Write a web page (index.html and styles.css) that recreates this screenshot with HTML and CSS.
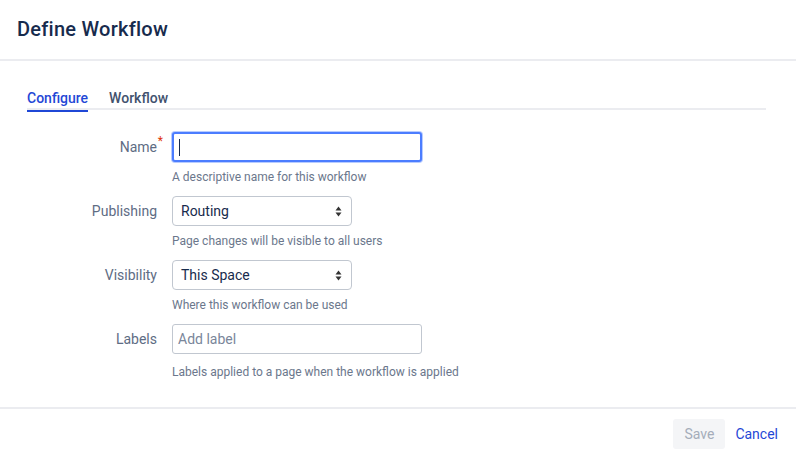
FILE: index.html
```html
<!DOCTYPE html>
<html>
<head>
<meta charset="utf-8">
<link rel="stylesheet" href="styles.css">
</head>
<body>
<div class="page">
  <header class="header"><h1 class="title">Define Workflow</h1></header>
  <main class="content">
    <nav class="tabs">
      <span class="tab active">Configure</span>
      <span class="tab">Workflow</span>
    </nav>
    <form class="form">
      <div class="row">
        <label class="label">Name<span class="req">*</span></label>
        <div class="field">
          <div class="text-input focused wide"><span class="caret"></span></div>
          <div class="help">A descriptive name for this workflow</div>
        </div>
      </div>
      <div class="row">
        <label class="label">Publishing</label>
        <div class="field">
          <div class="select">Routing<svg class="arrows" width="7" height="11" viewBox="0 0 7 11"><path d="M3.5 0.5 L6.5 4.5 H0.5 Z M3.5 10.5 L6.5 6.5 H0.5 Z" fill="#333"/></svg></div>
          <div class="help">Page changes will be visible to all users</div>
        </div>
      </div>
      <div class="row">
        <label class="label">Visibility</label>
        <div class="field">
          <div class="select">This Space<svg class="arrows" width="7" height="11" viewBox="0 0 7 11"><path d="M3.5 0.5 L6.5 4.5 H0.5 Z M3.5 10.5 L6.5 6.5 H0.5 Z" fill="#333"/></svg></div>
          <div class="help">Where this workflow can be used</div>
        </div>
      </div>
      <div class="row">
        <label class="label">Labels</label>
        <div class="field">
          <div class="text-input wide placeholder">Add label</div>
          <div class="help help-labels">Labels applied to a page when the workflow is applied</div>
        </div>
      </div>
    </form>
  </main>
  <footer class="footer">
    <button class="btn save" type="button">Save</button>
    <button class="btn cancel" type="button">Cancel</button>
  </footer>
</div>
</body>
</html>
```
FILE: styles.css
```css
* { box-sizing: border-box; }
html, body { margin: 0; padding: 0; background: #fff; }
body {
  font-family: Roboto, "Noto Sans", "Liberation Sans", sans-serif;
  color: #172b4d;
  width: 796px;
  height: 456px;
  overflow: hidden;
}
.page { display: flex; flex-direction: column; height: 456px; }
.header {
  height: 61px;
  border-bottom: 2px solid #ebecf0;
  padding: 0 17px;
  display: flex;
  align-items: center;
}
.title {
  margin: 0;
  font-size: 20px;
  font-weight: 500;
  letter-spacing: 0.25px;
  color: #172b4d;
  position: relative;
  top: -1px;
}
.content { flex: 1; padding: 0 30px 0 27px; }
.tabs {
  margin-top: 25px;
  display: flex;
  gap: 21px;
  border-bottom: 2px solid #ebecf0;
  height: 24px;
}
.tab {
  font-size: 14px;
  font-weight: 500;
  color: #42526e;
  line-height: 20px;
  height: 24px;
  padding-top: 2px;
}
.tab.active {
  color: #1f47d6;
  border-bottom: 2px solid #1f47d6;
  margin-bottom: -2px;
  height: 26px;
}
.form { margin-top: 22px; display: flex; flex-direction: column; }
.row {
  display: grid;
  grid-template-columns: 130px auto;
  column-gap: 15px;
  height: 64px;
}
.label {
  text-align: right;
  font-size: 14px;
  color: #5e6c84;
  line-height: 30px;
  position: relative;
}
.req {
  color: #de350b;
  position: absolute;
  right: -6px;
  top: -6px;
  font-size: 12px;
}
.field { display: flex; flex-direction: column; }
.text-input {
  height: 30px;
  border: 1px solid #c1c7d0;
  border-radius: 3px;
  font-size: 14px;
  line-height: 28px;
  padding: 0 6px;
  background: #fff;
}
.wide { width: 250px; }
.focused {
  border: 2px solid #4c7dff;
  box-shadow: 0 0 0 1px #b8ccff;
  display: flex;
  align-items: center;
  padding-left: 5px;
}
.caret {
  display: block;
  width: 1px;
  height: 17px;
  background: #172b4d;
}
.placeholder { color: #7a869a; padding-left: 5px; }
.select {
  width: 180px;
  height: 30px;
  border: 1px solid #c1c7d0;
  border-radius: 4px;
  font-size: 14px;
  line-height: 28px;
  padding: 0 8px;
  color: #172b4d;
  display: flex;
  justify-content: space-between;
  align-items: center;
}
.arrows { display: block; margin-right: 1px; }
.help {
  font-size: 12px;
  color: #6b778c;
  line-height: 16px;
  margin-top: 7px;
}
.help-labels { margin-top: 10px; }
.footer {
  height: 49px;
  border-top: 2px solid #ebecf0;
  display: flex;
  justify-content: flex-end;
  align-items: center;
  padding: 3px 18px 0 0;
  gap: 10px;
}
.btn {
  font-family: inherit;
  font-size: 14px;
  border: 0;
  border-radius: 3px;
  height: 30px;
  cursor: pointer;
}
.save {
  background: #f4f5f7;
  color: #a5adba;
  width: 52px;
}
.cancel {
  background: transparent;
  color: #1f47d6;
  padding: 0;
}
```
